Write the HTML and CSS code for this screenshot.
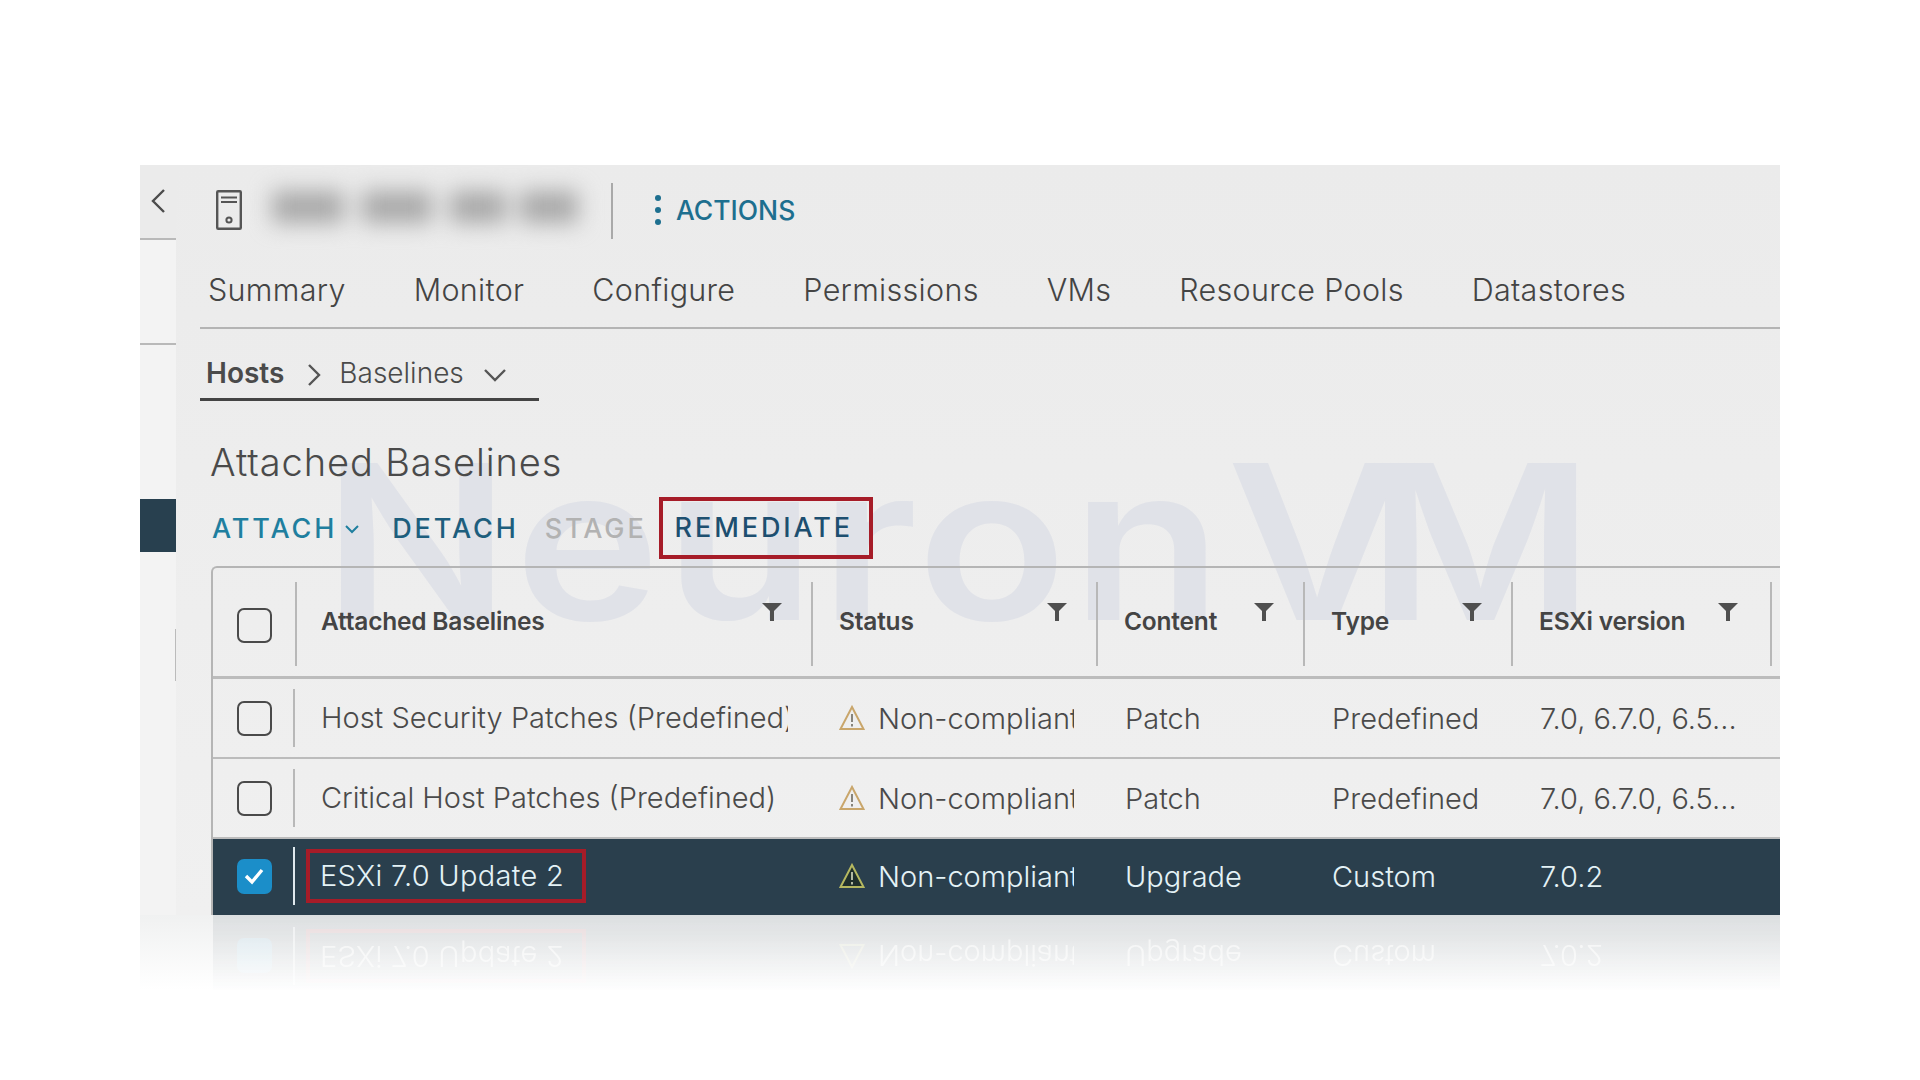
FILE: index.html
```html
<!DOCTYPE html>
<html lang="en">
<head>
    <meta charset="utf-8">
    <title>Attached Baselines</title>
    <link rel="stylesheet" href="styles.css">
</head>
<body>
    <div class="panel">
        <div class="watermark">Neuron<span class="watermark-v">V</span>M</div>
        <aside class="sidebar">
            <div class="side-top">
                <svg class="side-back" width="14" height="24" viewBox="0 0 14 24"><path d="M13 1 L2 12 L13 23" fill="none" stroke="#4c4c4c" stroke-width="2.4"/></svg>
            </div>
            <div class="side-section"></div>
            <div class="side-active"></div>
            <div class="side-tick"></div>
        </aside>
        <main class="main">
            <div class="head">
                <svg class="host-icon" width="26" height="40" viewBox="0 0 26 40">
                    <rect x="1.2" y="1.2" width="23.6" height="37.6" rx="1" fill="none" stroke="#555" stroke-width="2.4"/>
                    <path d="M5 7.5 H21 M5 12 H21" stroke="#555" stroke-width="2"/>
                    <circle cx="13" cy="30" r="2.6" fill="none" stroke="#555" stroke-width="2"/>
                </svg>
                <div class="host-name">
                    <span class="blur-a"></span>
                    <span class="blur-b"></span>
                    <span class="blur-c"></span>
                    <span class="blur-d"></span>
                </div>
                <div class="head-rule"></div>
                <div class="actions">
                    <svg width="8" height="32" viewBox="0 0 8 32"><circle cx="4" cy="4" r="3" fill="#1d6f8f"/><circle cx="4" cy="16" r="3" fill="#1d6f8f"/><circle cx="4" cy="28" r="3" fill="#1d6f8f"/></svg>
                    <span>ACTIONS</span>
                </div>
            </div>

            <nav class="tabs">
                <span>Summary</span>
                <span>Monitor</span>
                <span>Configure</span>
                <span>Permissions</span>
                <span>VMs</span>
                <span>Resource Pools</span>
                <span>Datastores</span>
            </nav>

            <div class="crumbs">
                <b>Hosts</b>
                <svg class="crumb-next" width="14" height="24" viewBox="0 0 14 24"><path d="M2 2 L12 12 L2 22" fill="none" stroke="#555" stroke-width="2.4"/></svg>
                <span>Baselines</span>
                <svg class="crumb-down" width="24" height="14" viewBox="0 0 24 14"><path d="M2 2 L12 12 L22 2" fill="none" stroke="#555" stroke-width="2.4"/></svg>
            </div>

            <h1 class="title">Attached Baselines</h1>

            <div class="toolbar">
                <span class="btn btn-attach">ATTACH</span>
                <svg class="attach-down" width="16" height="10" viewBox="0 0 16 10"><path d="M2 2 L8 8 L14 2" fill="none" stroke="#1f7f9f" stroke-width="2"/></svg>
                <span class="btn btn-detach">DETACH</span>
                <span class="btn btn-stage">STAGE</span>
                <span class="btn btn-remediate">REMEDIATE</span>
            </div>

            <div class="grid">
                <div class="grid-head">
                    <div class="head-check"><span class="box"></span></div>
                    <div class="head-cell head-first"><span>Attached Baselines</span><svg class="filter" width="20" height="18" viewBox="0 0 20 18"><path d="M0 0 H20 L12 8 V18 H8 V8 Z" fill="#4f4f4f"/></svg></div>
                    <div class="head-cell"><span>Status</span><svg class="filter" width="20" height="18" viewBox="0 0 20 18"><path d="M0 0 H20 L12 8 V18 H8 V8 Z" fill="#4f4f4f"/></svg></div>
                    <div class="head-cell"><span>Content</span><svg class="filter" width="20" height="18" viewBox="0 0 20 18"><path d="M0 0 H20 L12 8 V18 H8 V8 Z" fill="#4f4f4f"/></svg></div>
                    <div class="head-cell"><span>Type</span><svg class="filter" width="20" height="18" viewBox="0 0 20 18"><path d="M0 0 H20 L12 8 V18 H8 V8 Z" fill="#4f4f4f"/></svg></div>
                    <div class="head-cell head-last"><span>ESXi version</span><svg class="filter" width="20" height="18" viewBox="0 0 20 18"><path d="M0 0 H20 L12 8 V18 H8 V8 Z" fill="#4f4f4f"/></svg></div>
                    <div class="head-cell"></div>
                </div>

                <div class="row">
                    <div class="check"><span class="box"></span></div>
                    <div class="cell cell-name">Host Security Patches (Predefined)</div>
                    <div class="cell cell-status">
                        <svg class="warn" width="26" height="26" viewBox="0 0 26 26"><path d="M13 2 L24.5 24 H1.5 Z" fill="none" stroke="#c9a66b" stroke-width="2"/><path d="M13 9 V17 M13 19 V21.5" stroke="#6d6a60" stroke-width="1.6"/></svg>
                        Non-compliant
                    </div>
                    <div class="cell">Patch</div>
                    <div class="cell">Predefined</div>
                    <div class="cell">7.0, 6.7.0, 6.5...</div>
                </div>

                <div class="row">
                    <div class="check"><span class="box"></span></div>
                    <div class="cell cell-name">Critical Host Patches (Predefined)</div>
                    <div class="cell cell-status">
                        <svg class="warn" width="26" height="26" viewBox="0 0 26 26"><path d="M13 2 L24.5 24 H1.5 Z" fill="none" stroke="#c9a66b" stroke-width="2"/><path d="M13 9 V17 M13 19 V21.5" stroke="#6d6a60" stroke-width="1.6"/></svg>
                        Non-compliant
                    </div>
                    <div class="cell">Patch</div>
                    <div class="cell">Predefined</div>
                    <div class="cell">7.0, 6.7.0, 6.5...</div>
                </div>

                <div class="row row-selected">
                    <div class="check"><span class="box box-on"><svg width="22" height="18" viewBox="0 0 22 18"><path d="M3 9 L9 15 L19 3" fill="none" stroke="#fff" stroke-width="3.4"/></svg></span></div>
                    <div class="cell cell-name"><span class="marked">ESXi 7.0 Update 2</span></div>
                    <div class="cell cell-status">
                        <svg class="warn" width="26" height="26" viewBox="0 0 26 26"><path d="M13 2 L24.5 24 H1.5 Z" fill="#1f2f2c" stroke="#b5b860" stroke-width="2"/><path d="M13 9 V17 M13 19 V21.5" stroke="#d8dcc0" stroke-width="1.6"/></svg>
                        Non-compliant
                    </div>
                    <div class="cell">Upgrade</div>
                    <div class="cell">Custom</div>
                    <div class="cell">7.0.2</div>
                </div>
            </div>
        </main>
    </div>

    <div class="reflection">
        <div class="mirror">
            <div class="row row-selected">
                <div class="check"><span class="box box-on"></span></div>
                <div class="cell cell-name"><span class="marked">ESXi 7.0 Update 2</span></div>
                <div class="cell cell-status">
                    <svg class="warn" width="26" height="26" viewBox="0 0 26 26"><path d="M13 2 L24.5 24 H1.5 Z" fill="none" stroke="#b5b860" stroke-width="2"/></svg>
                    Non-compliant
                </div>
                <div class="cell">Upgrade</div>
                <div class="cell">Custom</div>
                <div class="cell">7.0.2</div>
            </div>
        </div>
    </div>
</body>
</html>
```

FILE: styles.css
```css
html, body {
    margin: 0;
    padding: 0;
    background: #fff;
}
body {
    padding: 165px 140px 0;
    width: 1640px;
    font-family: "Inter", "Liberation Sans", sans-serif;
    color: #4a4a4a;
}
.panel {
    position: relative;
    display: flex;
    height: 750px;
    overflow: hidden;
    background: linear-gradient(#ebebeb, #f0f0f0);
}
.watermark {
    position: absolute;
    left: 183px;
    top: 247px;
    font-size: 216px;
    line-height: 260px;
    font-weight: 600;
    letter-spacing: 4px;
    color: #e0e2e8;
    white-space: nowrap;
    transform: scaleX(1.14);
    transform-origin: left top;
}
.watermark-v {
    letter-spacing: -34px;
}

/* left rail */
.sidebar {
    position: relative;
    width: 36px;
    flex: none;
    display: flex;
    flex-direction: column;
    background: #f3f3f3;
}
.side-top {
    height: 73px;
    background: #ebebeb;
    border-bottom: 2px solid #b9b9b9;
}
.side-back {
    display: block;
    margin: 24px 0 0 11px;
}
.side-section {
    height: 103px;
    border-bottom: 2px solid #b9b9b9;
}
.side-active {
    margin-top: 154px;
    height: 53px;
    background: #28404f;
}
.side-tick {
    margin: 77px 0 0 35px;
    width: 1px;
    height: 52px;
    background: #bbb;
}

.main {
    position: relative;
    flex: 1;
    min-width: 0;
}

/* object header */
.head {
    display: flex;
    align-items: center;
    height: 74px;
    padding-left: 40px;
}
.host-icon {
    flex: none;
    margin-top: 16px;
}
.host-name {
    display: flex;
    width: 310px;
    margin: 10px 0 0 30px;
    filter: blur(11px);
}
.host-name span {
    height: 32px;
    background: #a8a8a8;
}
.blur-a { width: 72px; margin-right: 18px; }
.blur-b { width: 70px; margin-right: 18px; }
.blur-c { width: 56px; margin-right: 14px; }
.blur-d { width: 58px; }
.head-rule {
    width: 2px;
    height: 56px;
    margin: 18px 0 0 29px;
    background: #a9a9a9;
}
.actions {
    display: flex;
    align-items: center;
    gap: 14px;
    margin: 15px 0 0 41px;
    font-size: 26.5px;
    font-weight: 500;
    color: #1d6f8f;
}

/* tabs */
.tabs {
    display: flex;
    gap: 68px;
    margin-left: 24px;
    padding-left: 8px;
    box-sizing: border-box;
    align-items: center;
    padding-top: 11px;
    border-bottom: 2px solid #b4b4b4;
    font-size: 30.5px;
    letter-spacing: 0.3px;
    font-weight: 350;
    color: #444;
    margin-top: 2px;
    height: 88px;
}

/* hosts > baselines */
.crumbs {
    display: flex;
    align-items: center;
    width: 339px;
    height: 72px;
    box-sizing: border-box;
    margin-left: 24px;
    padding: 18px 0 0 6px;
    border-bottom: 3px solid #444;
    font-size: 28px;
    font-weight: 350;
}
.crumbs b {
    font-weight: 600;
}
.crumb-next {
    margin: 4px 18px 0 23px;
}
.crumb-down {
    margin: 4px 0 0 19px;
}

.title {
    margin: 0 0 0 34px;
    padding-top: 36px;
    height: 54px;
    font-size: 38px;
    letter-spacing: 0.9px;
    line-height: 50px;
    font-weight: 300;
    color: #4a4a4a;
}

/* action buttons */
.toolbar {
    display: flex;
    align-items: center;
    height: 62px;
    margin: 6px 0 0 36px;
    font-size: 27px;
    letter-spacing: 2.9px;
    font-weight: 500;
}
.btn-attach { color: #1f7f9f; }
.attach-down { margin: 2px 32px 0 7px; }
.btn-detach { color: #1d5e7d; margin-right: 26px; }
.btn-stage { color: #b2b2b2; margin-right: 12px; }
.btn-remediate {
    color: #1d4f70;
    box-sizing: border-box;
    height: 62px;
    line-height: 54px;
    padding: 0 16px 0 12px;
    border: 4px solid #a61c28;
}

/* baselines table */
.grid {
    margin: 7px 0 0 35px;
    border-top: 2px solid #b5b5b5;
    border-left: 2px solid #b5b5b5;
    border-top-left-radius: 6px;
}
.grid-head {
    display: grid;
    grid-template-columns: 82px 516px 285px 207px 208px 259px 1fr;
    padding: 14px 0 10px;
    border-bottom: 3px solid #bcbcbc;
    height: 84px;
}
.head-check {
    display: flex;
    justify-content: center;
    padding: 26px 0 0 0;
}
.head-cell {
    display: flex;
    justify-content: space-between;
    box-sizing: border-box;
    height: 84px;
    padding: 21px 29px 0 26px;
    border-left: 2px solid #b8b8b8;
    font-size: 24.5px;
    line-height: 36px;
    font-weight: 600;
    letter-spacing: -0.2px;
    color: #444;
    white-space: nowrap;
}
.head-first {
    padding-left: 24px;
}
.head-last {
    padding-right: 32px;
}
.filter {
    flex: none;
}
.box {
    display: flex;
    align-items: center;
    justify-content: center;
    box-sizing: border-box;
    width: 35px;
    height: 35px;
    border: 2px solid #4a4a4a;
    border-radius: 7px;
}
.box-on {
    border: none;
    background: #1b8ec9;
}
.row {
    display: grid;
    grid-template-columns: 80px 518px 285px 207px 208px 1fr;
    align-items: center;
    height: 78px;
    border-bottom: 2px solid #bcbcbc;
    font-size: 29px;
    font-weight: 350;
    color: #4a4a4a;
}
.check {
    display: flex;
    justify-content: center;
    padding-left: 2px;
}
.cell {
    padding-left: 29px;
    white-space: nowrap;
    overflow: hidden;
}
.cell-name {
    box-sizing: border-box;
    height: 58px;
    line-height: 58px;
    margin-right: 23px;
    padding: 0 0 0 26px;
    border-left: 2px solid #b8b8b8;
}
.cell-status {
    display: flex;
    align-items: center;
    gap: 13px;
    margin-right: 22px;
    padding: 0 0 0 28px;
}
.warn {
    flex: none;
}
.row-selected {
    height: 74px;
    padding-bottom: 4px;
    background: #2a3f4d;
    color: #e4f2f6;
    border-bottom: none;
}
.row-selected .cell-name {
    border-left-color: #dfe9ee;
    overflow: visible;
}
.marked {
    display: inline-block;
    margin-left: -15px;
    padding: 0 18px 0 10px;
    line-height: 46px;
    letter-spacing: 0.3px;
    border: 4px solid #a61c28;
}

/* fading copy of the bottom edge */
.reflection {
    height: 75px;
    overflow: hidden;
    background: linear-gradient(#f0f1f1, #fff);
}
.mirror {
    padding-left: 73px;
    transform: scaleY(-1);
    -webkit-mask-image: linear-gradient(to top, rgba(0, 0, 0, 0.1), transparent);
    mask-image: linear-gradient(to top, rgba(0, 0, 0, 0.1), transparent);
}
.mirror .row {
    color: #fff;
}
```
